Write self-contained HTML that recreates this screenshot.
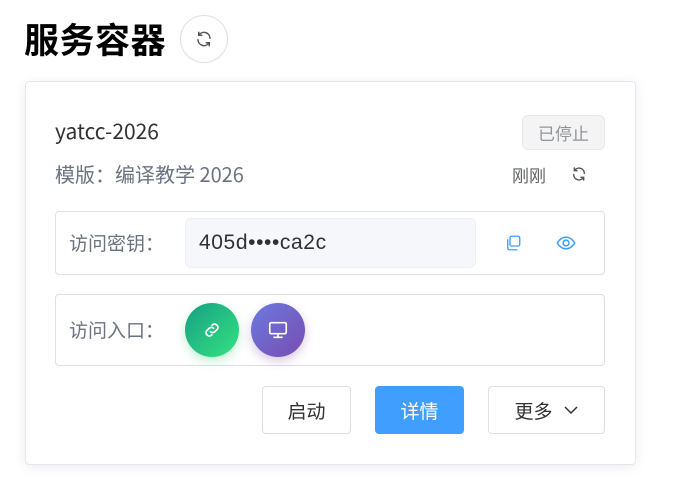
<!DOCTYPE html>
<html><head><meta charset="utf-8"><style>
*{box-sizing:border-box;margin:0;padding:0}
body{width:675px;height:487px;background:#fff;font-family:"Liberation Sans","Noto Sans CJK SC",sans-serif;position:relative;overflow:hidden}
.abs{position:absolute}
h1{position:absolute;left:24px;top:14px;font-size:35px;font-weight:700;color:#000;line-height:50px;font-family:"Noto Sans CJK SC",sans-serif;letter-spacing:0.5px}
.rbtn{left:180px;top:15px;width:48px;height:48px;border:1px solid #dcdfe6;border-radius:50%;display:flex;align-items:center;justify-content:center}
.card{left:25px;top:81px;width:611px;height:384px;border:1px solid #e4e7ed;border-radius:4px;box-shadow:0 2px 12px rgba(0,0,0,.08)}
.t{font-family:"Noto Sans CJK SC",sans-serif}
.box{border:1px solid #dcdfe6;border-radius:4px}
.btn{border:1px solid #dcdfe6;border-radius:4px;display:flex;align-items:center;justify-content:center;font-size:19px;color:#303133;font-family:"Noto Sans CJK SC",sans-serif}
</style></head><body>
<h1>服务容器</h1>
<div class="abs rbtn"><svg width="18" height="18" viewBox="0 0 24 24" fill="none" stroke="#555" stroke-width="2" stroke-linecap="round"><path d="M20 11a8 8 0 0 0-14.5-4.5M4 13a8 8 0 0 0 14.5 4.5"/><path d="M5 3v4h4M19 21v-4h-4"/></svg></div>
<div class="abs card"></div>
<div class="abs t" style="left:55px;top:116px;font-size:21px;color:#303133">yatcc-2026</div>
<div class="abs t" style="left:522px;top:115px;width:83px;height:35px;background:#f4f4f5;border:1px solid #e9e9eb;border-radius:6px;color:#909399;font-size:17px;display:flex;align-items:center;justify-content:center">已停止</div>
<div class="abs t" style="left:55px;top:159px;font-size:20px;color:#6b7280">模版：编译教学 2026</div>
<div class="abs t" style="left:512px;top:162px;font-size:17px;color:#606266">刚刚</div>
<svg class="abs" style="left:571px;top:166px" width="16" height="16" viewBox="0 0 24 24" fill="none" stroke="#555" stroke-width="2.2" stroke-linecap="round"><path d="M20 11a8 8 0 0 0-14.5-4.5M4 13a8 8 0 0 0 14.5 4.5"/><path d="M5 3v4h4M19 21v-4h-4"/></svg>
<div class="abs box" style="left:55px;top:211px;width:550px;height:64px"></div>
<div class="abs t" style="left:69px;top:229px;font-size:19px;color:#6b7280">访问密钥：</div>
<div class="abs" style="left:185px;top:218px;width:291px;height:50px;background:#f5f7fa;border:1px solid #eef0f4;border-radius:6px;font-size:21px;color:#303133;padding:0 0 0 13px;line-height:48px;letter-spacing:0.6px;font-family:'Liberation Sans',sans-serif">405d••••ca2c</div>
<svg class="abs" style="left:504px;top:234px" width="18" height="18" viewBox="0 0 24 24" fill="none" stroke="#409eff" stroke-width="1.8"><rect x="8" y="3" width="13" height="13" rx="2"/><path d="M5 7v12a2 2 0 0 0 2 2h11"/></svg>
<svg class="abs" style="left:555px;top:233px" width="22" height="20" viewBox="0 0 24 24" fill="none" stroke="#409eff" stroke-width="1.8"><path d="M1.5 12S5.5 5 12 5s10.5 7 10.5 7-4 7-10.5 7S1.5 12 1.5 12z"/><circle cx="12" cy="12" r="3.5"/></svg>
<div class="abs box" style="left:55px;top:294px;width:550px;height:72px"></div>
<div class="abs t" style="left:69px;top:316px;font-size:19px;color:#6b7280">访问入口：</div>
<div class="abs" style="left:185px;top:303px;width:54px;height:54px;border-radius:50%;background:linear-gradient(135deg,#17a085,#34e27f);box-shadow:0 4px 10px rgba(46,204,113,.3);display:flex;align-items:center;justify-content:center"><svg width="20" height="20" viewBox="0 0 24 24" fill="none" stroke="#fff" stroke-width="2" stroke-linecap="round"><path d="M10 14a4 4 0 0 0 5.5 0l3-3a4 4 0 0 0-5.5-5.5l-1 1"/><path d="M14 10a4 4 0 0 0-5.5 0l-3 3a4 4 0 0 0 5.5 5.5l1-1"/></svg></div>
<div class="abs" style="left:251px;top:303px;width:54px;height:54px;border-radius:50%;background:linear-gradient(135deg,#6b7ae0,#7a4cb0);box-shadow:0 4px 10px rgba(118,75,162,.3);display:flex;align-items:center;justify-content:center"><svg width="22" height="22" viewBox="0 0 24 24" fill="none" stroke="#fff" stroke-width="1.8"><rect x="3" y="4" width="18" height="12" rx="1.5"/><path d="M12 16v4M7 20h10"/></svg></div>
<div class="abs btn" style="left:262px;top:386px;width:89px;height:48px">启动</div>
<div class="abs btn" style="left:375px;top:386px;width:89px;height:48px;background:#409eff;border-color:#409eff;color:#fff">详情</div>
<div class="abs btn" style="left:488px;top:386px;width:117px;height:48px">更多<svg style="margin-left:10px" width="16" height="10" viewBox="0 0 16 10" fill="none" stroke="#303133" stroke-width="1.5"><path d="M2 2l6 6 6-6"/></svg></div>
</body></html>
